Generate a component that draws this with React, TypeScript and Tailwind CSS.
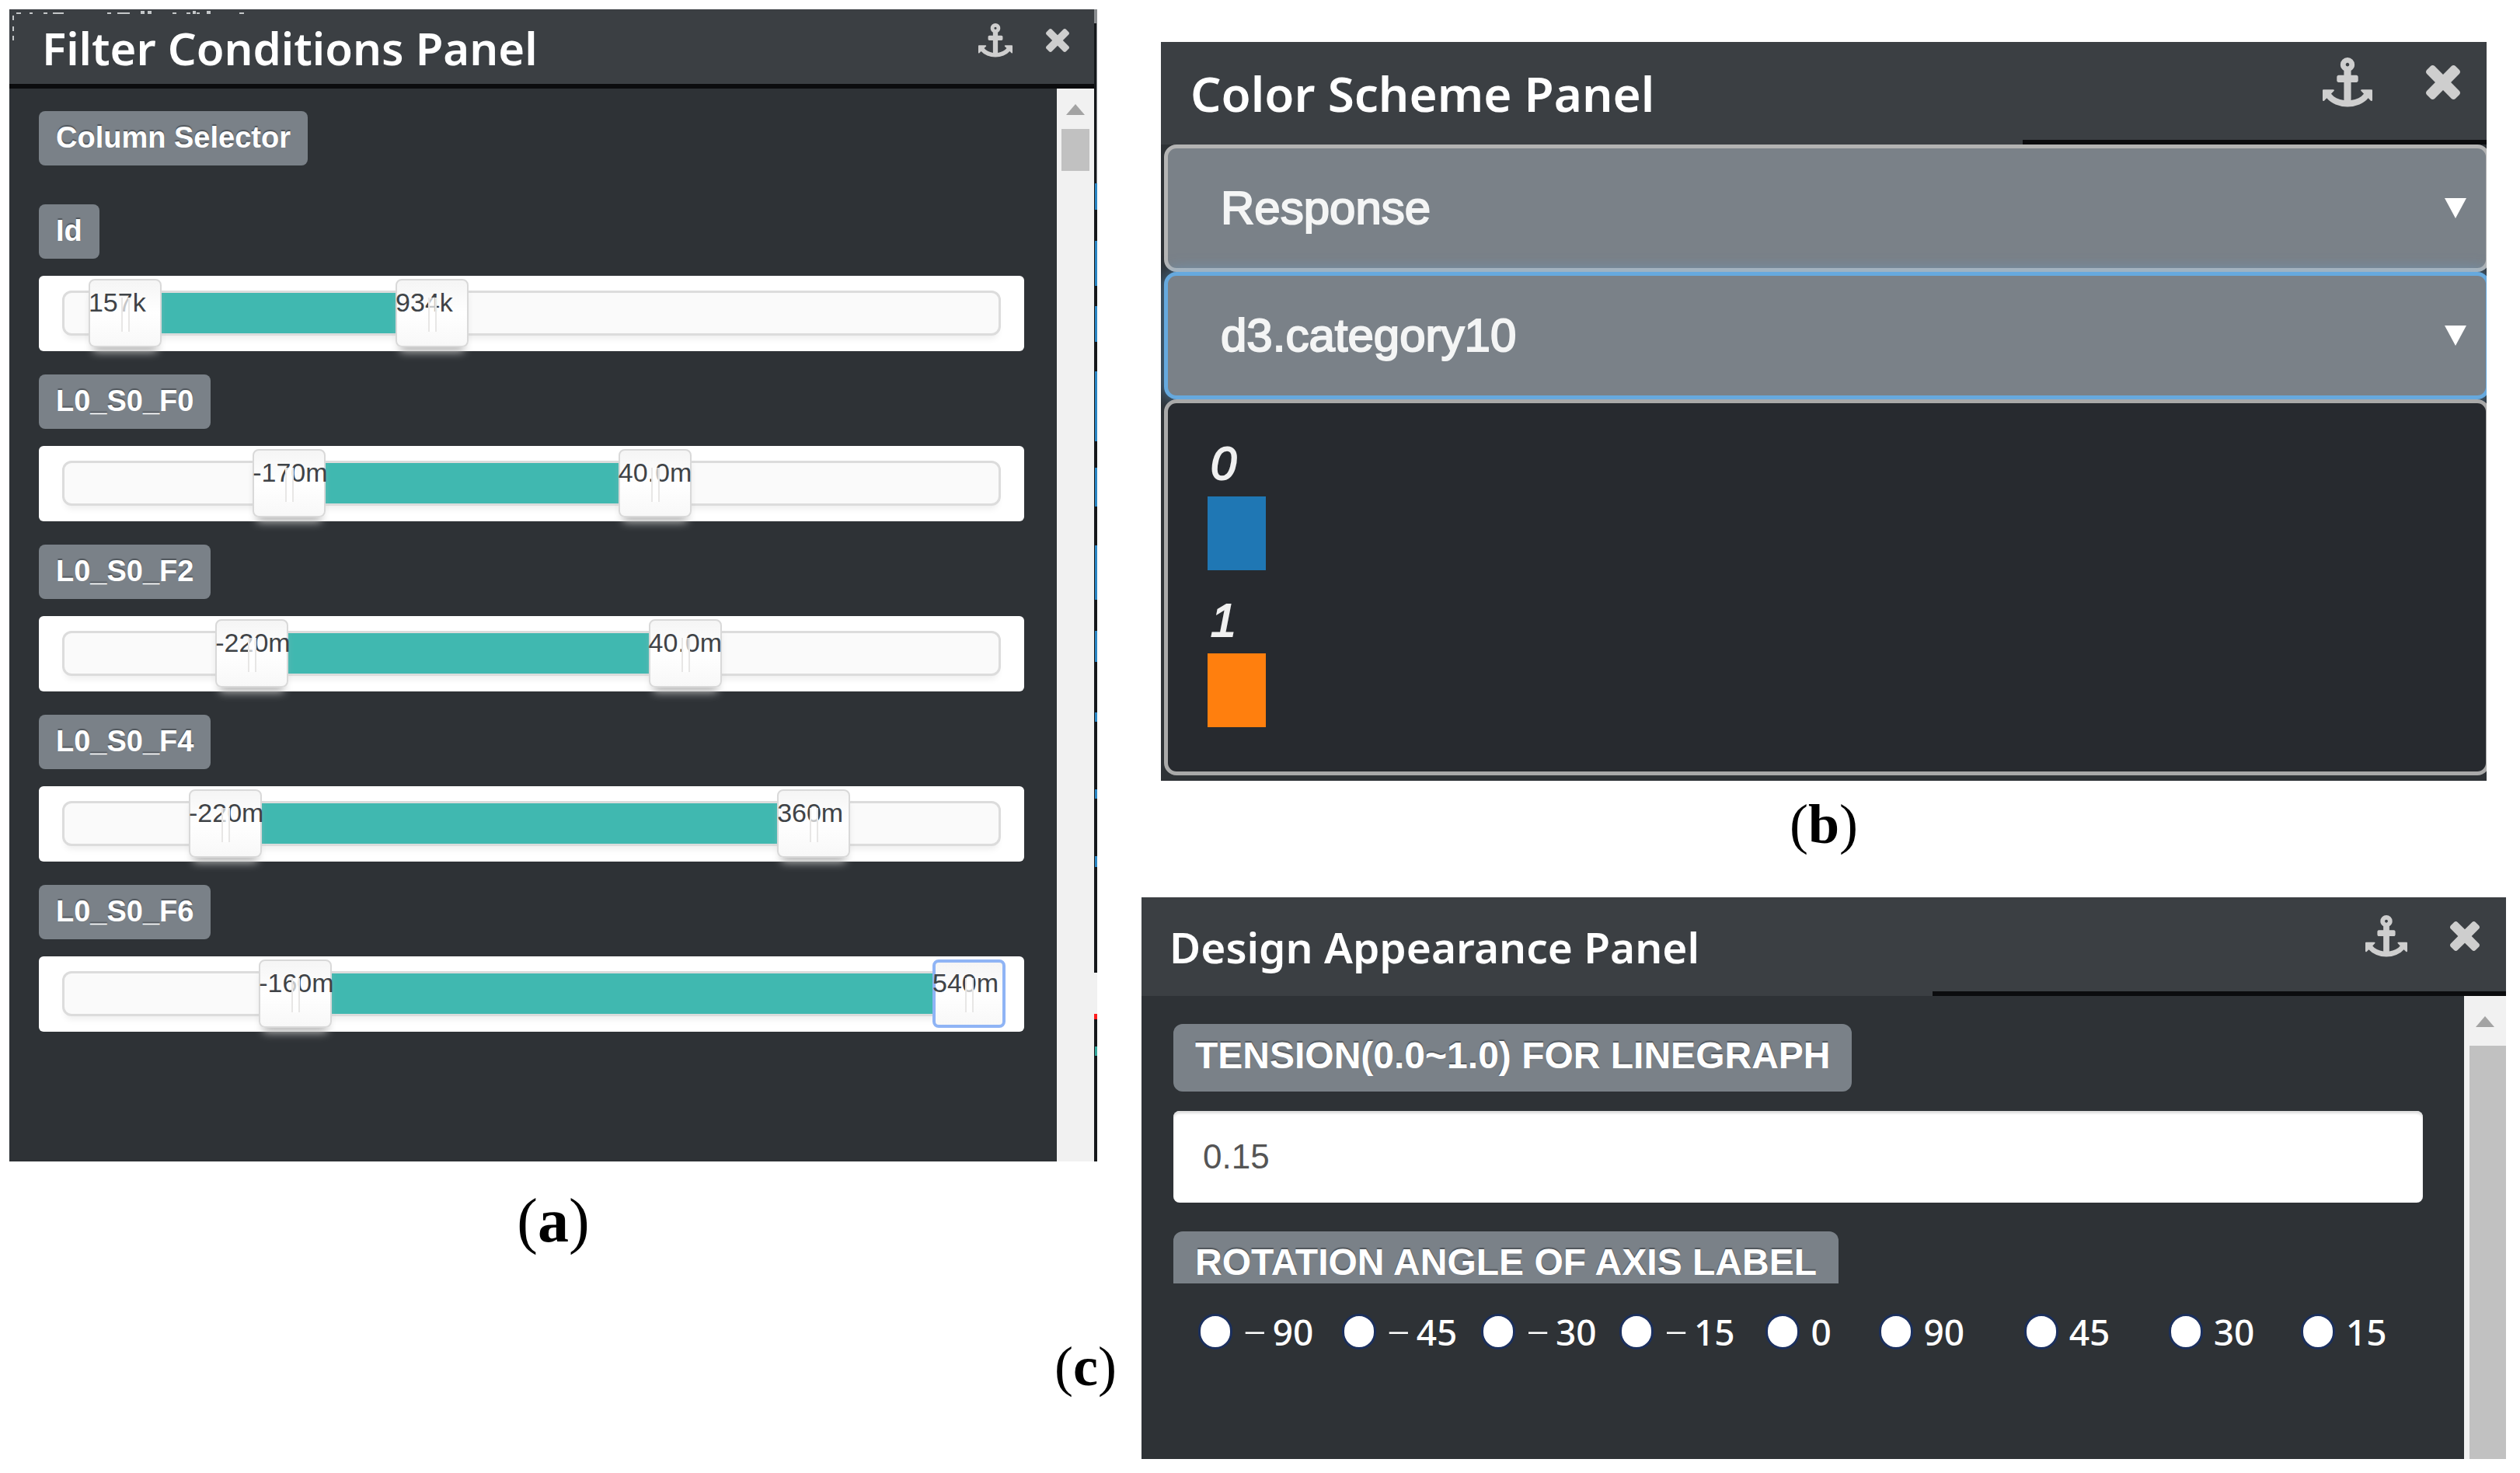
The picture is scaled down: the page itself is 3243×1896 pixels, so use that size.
import { useState } from 'react';
import type { ReactNode } from 'react';
import clsx from 'clsx';

interface RangeFilter {
  name: string;
  from: number;
  to: number;
  fromLabel: string;
  toLabel: string;
  focused?: boolean;
}

// from / to are percentages of the slider's travel
const filters: RangeFilter[] = [
  { name: 'Id', from: 4.2, to: 38.8, fromLabel: '157k', toLabel: '934k' },
  { name: 'L0_S0_F0', from: 22.7, to: 63.9, fromLabel: '-170m', toLabel: '40.0m' },
  { name: 'L0_S0_F2', from: 18.5, to: 67.3, fromLabel: '-220m', toLabel: '40.0m' },
  { name: 'L0_S0_F4', from: 15.5, to: 81.8, fromLabel: '-220m', toLabel: '360m' },
  { name: 'L0_S0_F6', from: 23.4, to: 99.3, fromLabel: '-160m', toLabel: '540m', focused: true },
];

const angles = [-90, -45, -30, -15, 0, 90, 45, 30, 15];

const swatches = [
  { label: '0', color: 'bg-[#1f77b4]' },
  { label: '1', color: 'bg-[#ff7f0e]' },
];

function AnchorIcon({ className }: { className?: string }) {
  return (
    <svg viewBox="0 0 1792 1792" fill="currentColor" className={className} aria-hidden="true">
      <path d="M960 256q0-26-19-45t-45-19-45 19-19 45 19 45 45 19 45-19 19-45zm832 928v352q0 22-20 30-8 2-12 2-12 0-23-9l-93-93q-119 143-318.5 226.5t-429.5 83.5-429.5-83.5-318.5-226.5l-93 93q-9 9-23 9-4 0-12-2-20-8-20-30v-352q0-14 9-23t23-9h352q22 0 30 20 8 19-7 35l-100 100q67 91 189.5 153.5t271.5 82.5v-647h-192q-26 0-45-19t-19-45v-128q0-26 19-45t45-19h192v-163q-58-34-93-92.5t-35-128.5q0-106 75-181t181-75 181 75 75 181q0 70-35 128.5t-93 92.5v163h192q26 0 45 19t19 45v128q0 26-19 45t-45 19h-192v647q149-20 271.5-82.5t189.5-153.5l-100-100q-15-16-7-35 8-20 30-20h352q14 0 23 9t9 23z" />
    </svg>
  );
}

function CloseIcon({ className }: { className?: string }) {
  return (
    <svg viewBox="302 366 1188 1188" fill="currentColor" className={className} aria-hidden="true">
      <path d="M1490 1322q0 40-28 68l-136 136q-28 28-68 28t-68-28l-294-294-294 294q-28 28-68 28t-68-28l-136-136q-28-28-28-68t28-68l294-294-294-294q-28-28-28-68t28-68l136-136q28-28 68-28t68 28l294 294 294-294q28-28 68-28t68 28l136 136q28 28 28 68t-28 68l-294 294 294 294q28 28 28 68z" />
    </svg>
  );
}

interface PanelHeaderProps {
  title: string;
  className: string;
  titleClass: string;
  actionsClass: string;
  anchorClass: string;
  closeClass: string;
  ruleClass: string;
}

function PanelHeader({ title, className, titleClass, actionsClass, anchorClass, closeClass, ruleClass }: PanelHeaderProps) {
  return (
    <header className="bg-[#3b3f43]">
      <div className={clsx('flex items-start justify-between', className)}>
        <h2
          className={clsx(
            "font-['Noto_Sans',sans-serif] leading-[84px] font-semibold whitespace-nowrap text-white",
            titleClass,
          )}
        >
          {title}
        </h2>
        <div className={clsx('flex items-center text-[#cecece]', actionsClass)}>
          <button type="button" aria-label="Dock panel">
            <AnchorIcon className={anchorClass} />
          </button>
          <button type="button" aria-label="Close panel">
            <CloseIcon className={closeClass} />
          </button>
        </div>
      </div>
      <div className={clsx('ml-auto h-1.5 bg-[#0b0c0e]', ruleClass)} />
    </header>
  );
}

function ScrollUp() {
  return (
    <svg viewBox="0 0 24 14" className="h-3.5 w-6 fill-[#a3a3a3]" aria-hidden="true">
      <path d="M12 0 24 14H0z" />
    </svg>
  );
}

function Handle({ at, label }: { at: number; label: string }) {
  return (
    <span
      className="pointer-events-none absolute top-0 h-[88px] w-[94px] text-[34px] leading-[60px] whitespace-nowrap text-[#3f4347]"
      style={{ left: `${at}%` }}
    >
      {label}
      <span className="absolute top-6 left-[42px] h-11 w-[11px] border-x-2 border-[#e8e7e6] bg-white/70" />
    </span>
  );
}

const thumb =
  '[&::-webkit-slider-thumb]:pointer-events-auto [&::-webkit-slider-thumb]:h-[88px] [&::-webkit-slider-thumb]:w-[94px] [&::-webkit-slider-thumb]:appearance-none [&::-webkit-slider-thumb]:rounded-[8px] [&::-webkit-slider-thumb]:border-2 [&::-webkit-slider-thumb]:bg-linear-to-b [&::-webkit-slider-thumb]:from-[#f5f5f5] [&::-webkit-slider-thumb]:via-white [&::-webkit-slider-thumb]:to-[#f8f8f8]';
const thumbIdle =
  '[&::-webkit-slider-thumb]:border-[#d9d9d9] [&::-webkit-slider-thumb]:shadow-[0_12px_12px_-6px_#bbbbbb]';
const thumbFocused = '[&::-webkit-slider-thumb]:border-4 [&::-webkit-slider-thumb]:border-[#8fb4f5]';

function RangeRow({ filter }: { filter: RangeFilter }) {
  const [from, setFrom] = useState(filter.from);
  const [to, setTo] = useState(filter.to);
  const input = 'pointer-events-none absolute inset-x-0 top-0 h-[88px] w-full appearance-none bg-transparent';

  return (
    <div className="mb-[30px]">
      <Badge>{filter.name}</Badge>
      <div className="mt-[22px] h-[97px] rounded-md bg-white px-4 pt-1">
        <div className="relative h-[88px]">
          <div className="absolute inset-x-3.5 top-[15px] h-[58px] rounded-xl border-[3px] border-[#dcdcdc] bg-[#fafafa] shadow-[0_8px_8px_-4px_#eeeeee]" />
          <div className="absolute inset-y-0 right-[94px] left-0">
            <div
              className="absolute top-[18px] ml-12 h-[52px] bg-[#40b8b0]"
              style={{ left: `${from}%`, width: `${to - from}%` }}
            />
          </div>
          <input
            type="range"
            step="0.1"
            aria-label={`${filter.name} minimum`}
            value={from}
            onChange={(e) => setFrom(Math.min(Number(e.target.value), to))}
            className={clsx(input, thumb, thumbIdle)}
          />
          <input
            type="range"
            step="0.1"
            aria-label={`${filter.name} maximum`}
            value={to}
            onChange={(e) => setTo(Math.max(Number(e.target.value), from))}
            className={clsx(input, thumb, filter.focused ? thumbFocused : thumbIdle)}
          />
          <div className="pointer-events-none absolute inset-y-0 right-[94px] left-0">
            <Handle at={from} label={filter.fromLabel} />
            <Handle at={to} label={filter.toLabel} />
          </div>
        </div>
      </div>
    </div>
  );
}

function Badge({ children }: { children: ReactNode }) {
  return (
    <span className="block h-[70px] w-fit rounded-lg bg-[#7a8188] px-[22px] text-[38px] leading-[68px] font-bold text-white [text-shadow:0_-2px_1px_#50565c]">
      {children}
    </span>
  );
}

function FilterPanel() {
  return (
    <div className="flex">
      <section className="relative min-w-0 flex-1 bg-[#2e3236]">
        {/* tops of the labels that lie behind the panel */}
        <svg viewBox="0 0 310 60" className="absolute top-0 left-0 h-[60px] w-[310px] fill-[#c4c7c9]" aria-hidden="true">
          <path d="M9 4h6v2H9zM26 4h4v2h-4zM44 4h5v2h-5zM56 4h14v2H56zM126 4h5v2h-5zM139 4h16v2h-16zM169 2h5v4h-5zM178 2h5v4h-5zM210 4h5v2h-5zM228 4h5v2h-5zM236 2h4v4h-4zM241 4h4v2h-4zM254 2h5v4h-5zM296 4h6v2h-6zM4 8h2v6H4zM4 22h2v6H4zM4 34h2v6H4z" />
        </svg>
        <PanelHeader
          title="Filter Conditions Panel"
          className="h-24 pt-2 pr-8 pl-[42px]"
          titleClass="text-[58px]"
          actionsClass="gap-[43px] pt-2"
          anchorClass="h-12 w-11"
          closeClass="size-[30px]"
          ruleClass="w-full"
        />
        <div className="flex">
          <div className="min-w-0 flex-1 pt-[29px] pr-[42px] pb-[137px] pl-[38px]">
            <button type="button" className="mb-[50px] block text-left">
              <Badge>Column Selector</Badge>
            </button>
            {filters.map((f) => (
              <RangeRow key={f.name} filter={f} />
            ))}
          </div>
          <div className="flex w-12 flex-col items-center bg-[#f1f1f1] pt-5">
            <ScrollUp />
            <div className="mt-[18px] h-[54px] w-9 bg-[#c1c1c1]" />
          </div>
        </div>
      </section>
      {/* sliver of the chart next to the panel */}
      <svg viewBox="0 0 4 1483" preserveAspectRatio="none" className="w-1 shrink-0 self-stretch" aria-hidden="true">
        <path fill="#15181b" d="M0 0h4v1240H0zM0 1296h4v187H0z" />
        <path fill="#8a8d90" d="M0 0h4v18H0zM3 18h1v206H3z" />
        <path
          fill="#2b86c4"
          d="M1 224h3v34H1zM1 298h3v58H1zM1 382h3v46H1zM1 466h3v90H1zM1 590h3v50H1zM1 690h3v70H1zM1 800h3v40H1zM1 905h3v12H1zM1 1004h3v12H1zM1 1090h3v14H1z"
        />
        <path fill="#f1f1f1" d="M0 1240h4v56H0z" />
        <path fill="#ff1d1d" d="M0 1293h4v7H0z" />
        <path fill="#35a79c" d="M1 1335h3v12H1z" />
      </svg>
    </div>
  );
}

interface SchemeSelectProps {
  label: string;
  options: string[];
  className: string;
}

function SchemeSelect({ label, options, className }: SchemeSelectProps) {
  return (
    <div className="relative">
      <select
        aria-label={label}
        className={clsx(
          'relative block h-[164px] w-full appearance-none rounded-2xl border-[5px] bg-[#7a8188] pl-[68px] text-[60px] text-[#f4f5f5] [-webkit-text-stroke:2px_#f4f5f5]',
          className,
        )}
      >
        {options.map((o) => (
          <option key={o}>{o}</option>
        ))}
      </select>
      <svg viewBox="0 0 28 26" className="pointer-events-none absolute top-[69px] right-[30px] h-[26px] w-7 fill-white" aria-hidden="true">
        <path d="M0 0h28L14 26z" />
      </svg>
    </div>
  );
}

function ColorPanel() {
  return (
    <section className="overflow-hidden bg-[#2e3236] pb-[7px]">
      <PanelHeader
        title="Color Scheme Panel"
        className="h-[126px] pt-6 pr-[34px] pl-[38px]"
        titleClass="text-[62px]"
        actionsClass="gap-[68px] -mt-1"
        anchorClass="h-16 w-[66px]"
        closeClass="size-11"
        ruleClass="w-[35%]"
      />
      <div className="-mr-1 ml-1">
        <SchemeSelect label="Column" options={['Response']} className="border-[#b4b4b4]" />
        <SchemeSelect
          label="Color scheme"
          options={['d3.category10']}
          className="border-[#66a9de] shadow-[0_0_20px_rgba(102,175,233,0.6)]"
        />
        <ul className="relative rounded-2xl border-[5px] border-[#a9a9a9] bg-[#272a2f] pt-9 pb-[34px] pl-[51px]">
          {swatches.map((s) => (
            <li key={s.label} className="pb-[23px]">
              <span className="block pl-1 text-[60px] leading-[84px] text-[#f0f0f0] italic [-webkit-text-stroke:2px_#f0f0f0]">
                {s.label}
              </span>
              <span className={clsx('block h-[95px] w-[75px]', s.color)} />
            </li>
          ))}
        </ul>
      </div>
    </section>
  );
}

function DesignPanel() {
  return (
    <section className="bg-[#2e3236]">
      <PanelHeader
        title="Design Appearance Panel"
        className="h-[121px] pt-[22px] pr-[34px] pl-9"
        titleClass="text-[55px]"
        actionsClass="gap-[55px]"
        anchorClass="h-14 w-[54px]"
        closeClass="size-[38px]"
        ruleClass="w-[42%]"
      />
      <div className="flex">
        <div className="min-w-0 flex-1 pt-9 pr-[53px] pb-[141px] pl-[41px]">
          <label
            htmlFor="tension"
            className="block h-[87px] w-fit rounded-xl bg-[#7a8188] px-7 text-[48px] leading-[82px] font-bold whitespace-nowrap text-white [text-shadow:0_-2px_1px_#50565c]"
          >
            TENSION(0.0~1.0) FOR LINEGRAPH
          </label>
          <input
            id="tension"
            type="text"
            defaultValue="0.15"
            className="mt-[25px] block h-[118px] w-full rounded-lg bg-white px-[38px] text-[44px] text-[#555555] shadow-[inset_0_3px_3px_#dddddd]"
          />
          <fieldset className="mt-[37px]">
            <legend className="block h-[67px] w-fit rounded-t-xl bg-[#7a8188] px-7 text-[48px] leading-[80px] font-bold whitespace-nowrap text-white [text-shadow:0_-2px_1px_#50565c]">
              ROTATION ANGLE OF AXIS LABEL
            </legend>
            <div className="grid grid-cols-[185fr_179fr_178fr_188fr_145fr_187fr_186fr_170fr_157fr] pt-[39px] pl-8">
              {angles.map((a) => (
                <label
                  key={a}
                  className="flex h-[46px] items-center gap-3.5 font-['Noto_Sans',sans-serif] text-[46px] leading-[46px] font-medium whitespace-nowrap text-white"
                >
                  <input
                    type="radio"
                    name="rotation"
                    value={a}
                    className="h-[46px] w-11 shrink-0 appearance-none rounded-full border-[3px] border-[#1b2f5c] bg-white"
                  />
                  <span className="flex items-center gap-2">
                    {a < 0 && <span className="text-[52px] font-light">−</span>}
                    {Math.abs(a)}
                  </span>
                </label>
              ))}
            </div>
          </fieldset>
        </div>
        <div className="flex w-[54px] flex-col items-center bg-[#f1f1f1] pt-[26px]">
          <ScrollUp />
          <div className="mt-6 w-[47px] flex-1 self-end bg-[#c1c1c1]" />
        </div>
      </div>
    </section>
  );
}

function Caption({ letter, className }: { letter: string; className: string }) {
  return (
    <p className={clsx("text-center font-['Liberation_Serif',serif] text-black", className)}>
      (<b>{letter}</b>)
    </p>
  );
}

export default function App() {
  return (
    <main className="grid grid-cols-[1333fr_67fr_57fr_1756fr] grid-rows-[auto_1fr_auto] bg-white pr-[18px] pl-3 font-['Liberation_Sans',Arial,sans-serif]">
      <div className="col-span-2 col-start-1 row-span-2 row-start-1 min-w-0 pt-3">
        <FilterPanel />
        <Caption letter="a" className="pt-9 pb-7 text-[80px] leading-[80px]" />
      </div>
      <div className="col-start-4 row-start-1 min-w-0 px-[25px] pt-[54px]">
        <ColorPanel />
        <Caption letter="b" className="pt-5 pb-[58px] text-[72px] leading-[72px]" />
      </div>
      <div className="col-start-4 row-span-2 row-start-2 min-w-0">
        <DesignPanel />
      </div>
      <div className="col-span-2 col-start-2 row-start-3">
        <Caption letter="c" className="pt-[84px] pr-5 pb-[83px] text-[72px] leading-[72px]" />
      </div>
    </main>
  );
}
